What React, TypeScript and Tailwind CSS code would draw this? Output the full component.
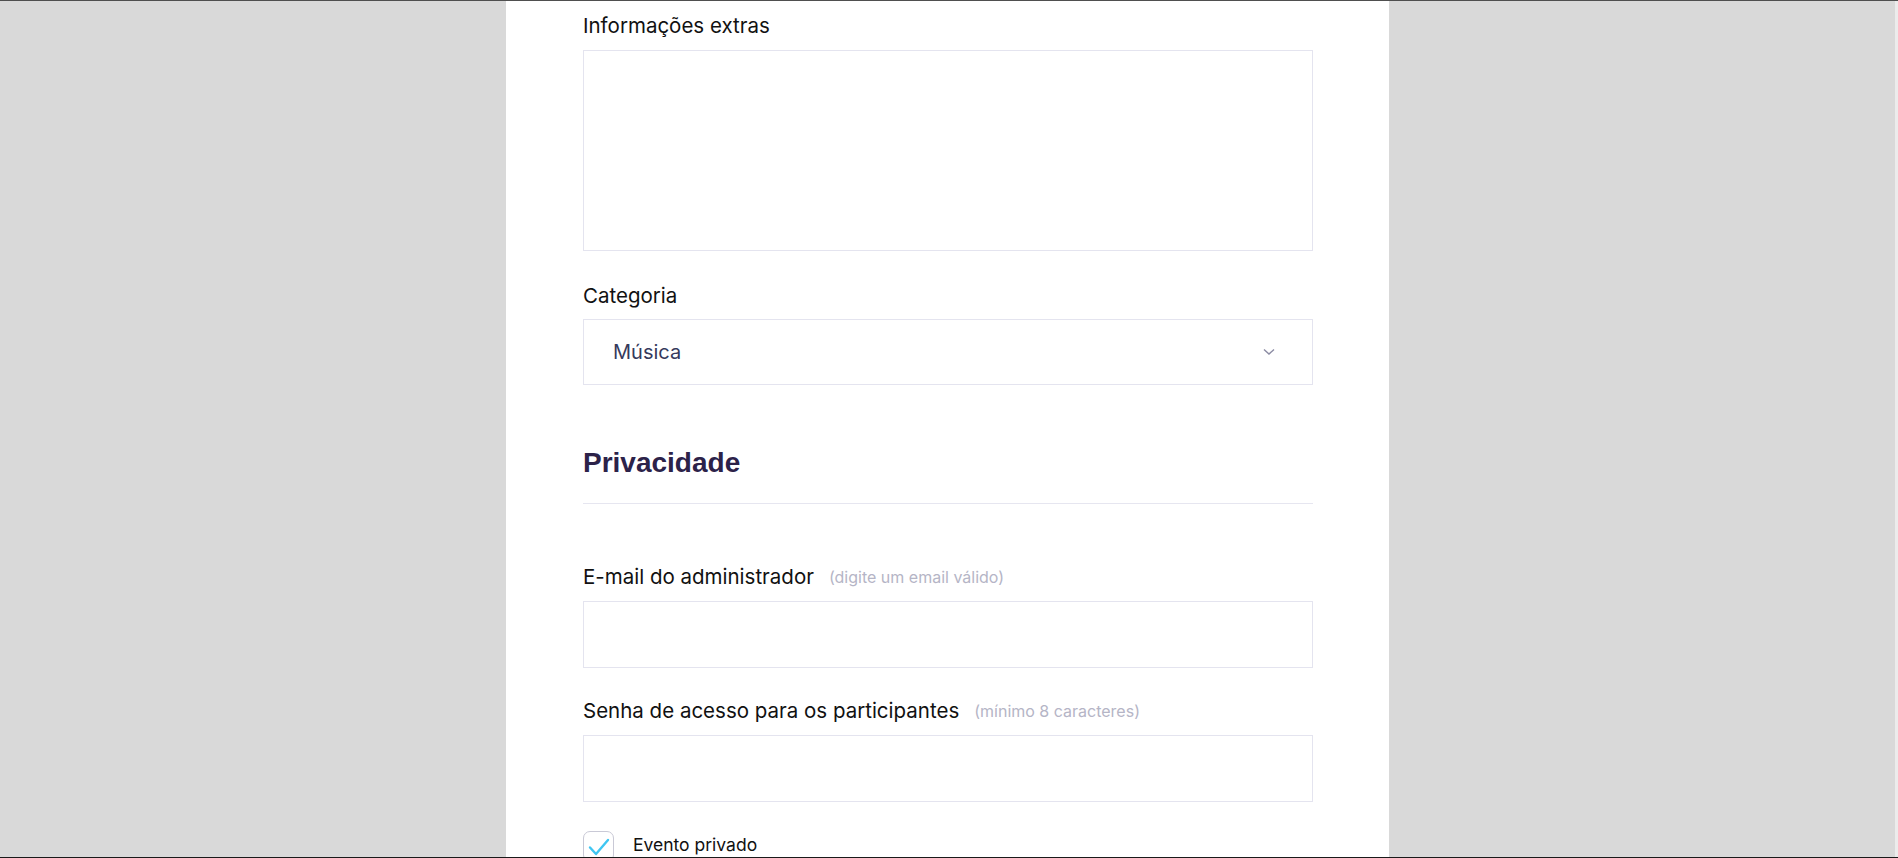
import React from "react";

const font = { fontFamily: "Inter, 'Noto Sans', sans-serif" };

function Label({ text, hint, className }: { text: string; hint?: string; className?: string }) {
  return (
    <div className={"flex items-center h-[24px] leading-[24px] whitespace-nowrap shrink-0 " + (className ?? "")}>
      <span className="text-[20.5px] text-[#111111]">{text}</span>
      {hint && <span className="ml-[15px] text-[16px] text-[#b5b5c6]">{hint}</span>}
    </div>
  );
}

export default function App() {
  return (
    <div className="w-full h-[858px] bg-[#d9d9d9] overflow-hidden flex flex-col" style={font}>
      <div className="h-[1px] bg-[#4f4f4f] w-full shrink-0" />
      <div className="flex flex-1 min-h-0">
        <div className="w-[506px] shrink-0" />
        <div className="w-[883px] shrink-0 bg-white pl-[77px] pr-[76px] pt-[13px] flex flex-col">
          <Label text="Informações extras" className="mb-[12px]" />
          <textarea className="block w-[730px] h-[201px] shrink-0 border border-[#e4e4ef] resize-none outline-none" />

          <Label text="Categoria" className="mt-[33px] mb-[11px]" />
          <div className="w-[730px] h-[66px] shrink-0 border border-[#e4e4ef] flex items-center justify-between pl-[29px] pr-[37px]">
            <span className="text-[20px] text-[#363a5c]">Música</span>
            <svg width="12" height="8" viewBox="0 0 12 8" fill="none">
              <path d="M1 1.5 L6 6 L11 1.5" stroke="#8b8ba3" strokeWidth="1.4" />
            </svg>
          </div>

          <h2
            className="mt-[61px] h-[34px] leading-[34px] text-[28px] font-bold text-[#2c2249] shrink-0"
            style={{ fontFamily: "'Liberation Sans', Arial, sans-serif" }}
          >
            Privacidade
          </h2>
          <div className="mt-[23px] h-[1px] w-[730px] bg-[#e6e6f0] shrink-0" />

          <Label text="E-mail do administrador" hint="(digite um email válido)" className="mt-[61px] mb-[12px]" />
          <input className="block w-[730px] h-[67px] shrink-0 border border-[#e4e4ef] outline-none" />

          <Label text="Senha de acesso para os participantes" hint="(mínimo 8 caracteres)" className="mt-[31px] mb-[12px]" />
          <input className="block w-[730px] h-[67px] shrink-0 border border-[#e4e4ef] outline-none" />

          <div className="mt-[29px] flex items-start shrink-0">
            <div className="w-[31px] h-[31px] rounded-[7px] border border-[#c9c9d6] flex items-center justify-center shrink-0">
              <svg width="22" height="18" viewBox="0 0 22 18" fill="none">
                <path d="M2 9.5 L8 16 L20 2" stroke="#3fc6f2" strokeWidth="2.4" strokeLinecap="round" strokeLinejoin="round" />
              </svg>
            </div>
            <span className="ml-[19px] mt-[2px] text-[17.5px] text-[#111111] leading-[24px] whitespace-nowrap">Evento privado</span>
          </div>
        </div>
        <div className="flex-1" />
        <div className="w-[3px] bg-[#ececec] shrink-0" />
      </div>
      <div className="h-[1px] bg-[#1a1a1a] w-full shrink-0" />
    </div>
  );
}
